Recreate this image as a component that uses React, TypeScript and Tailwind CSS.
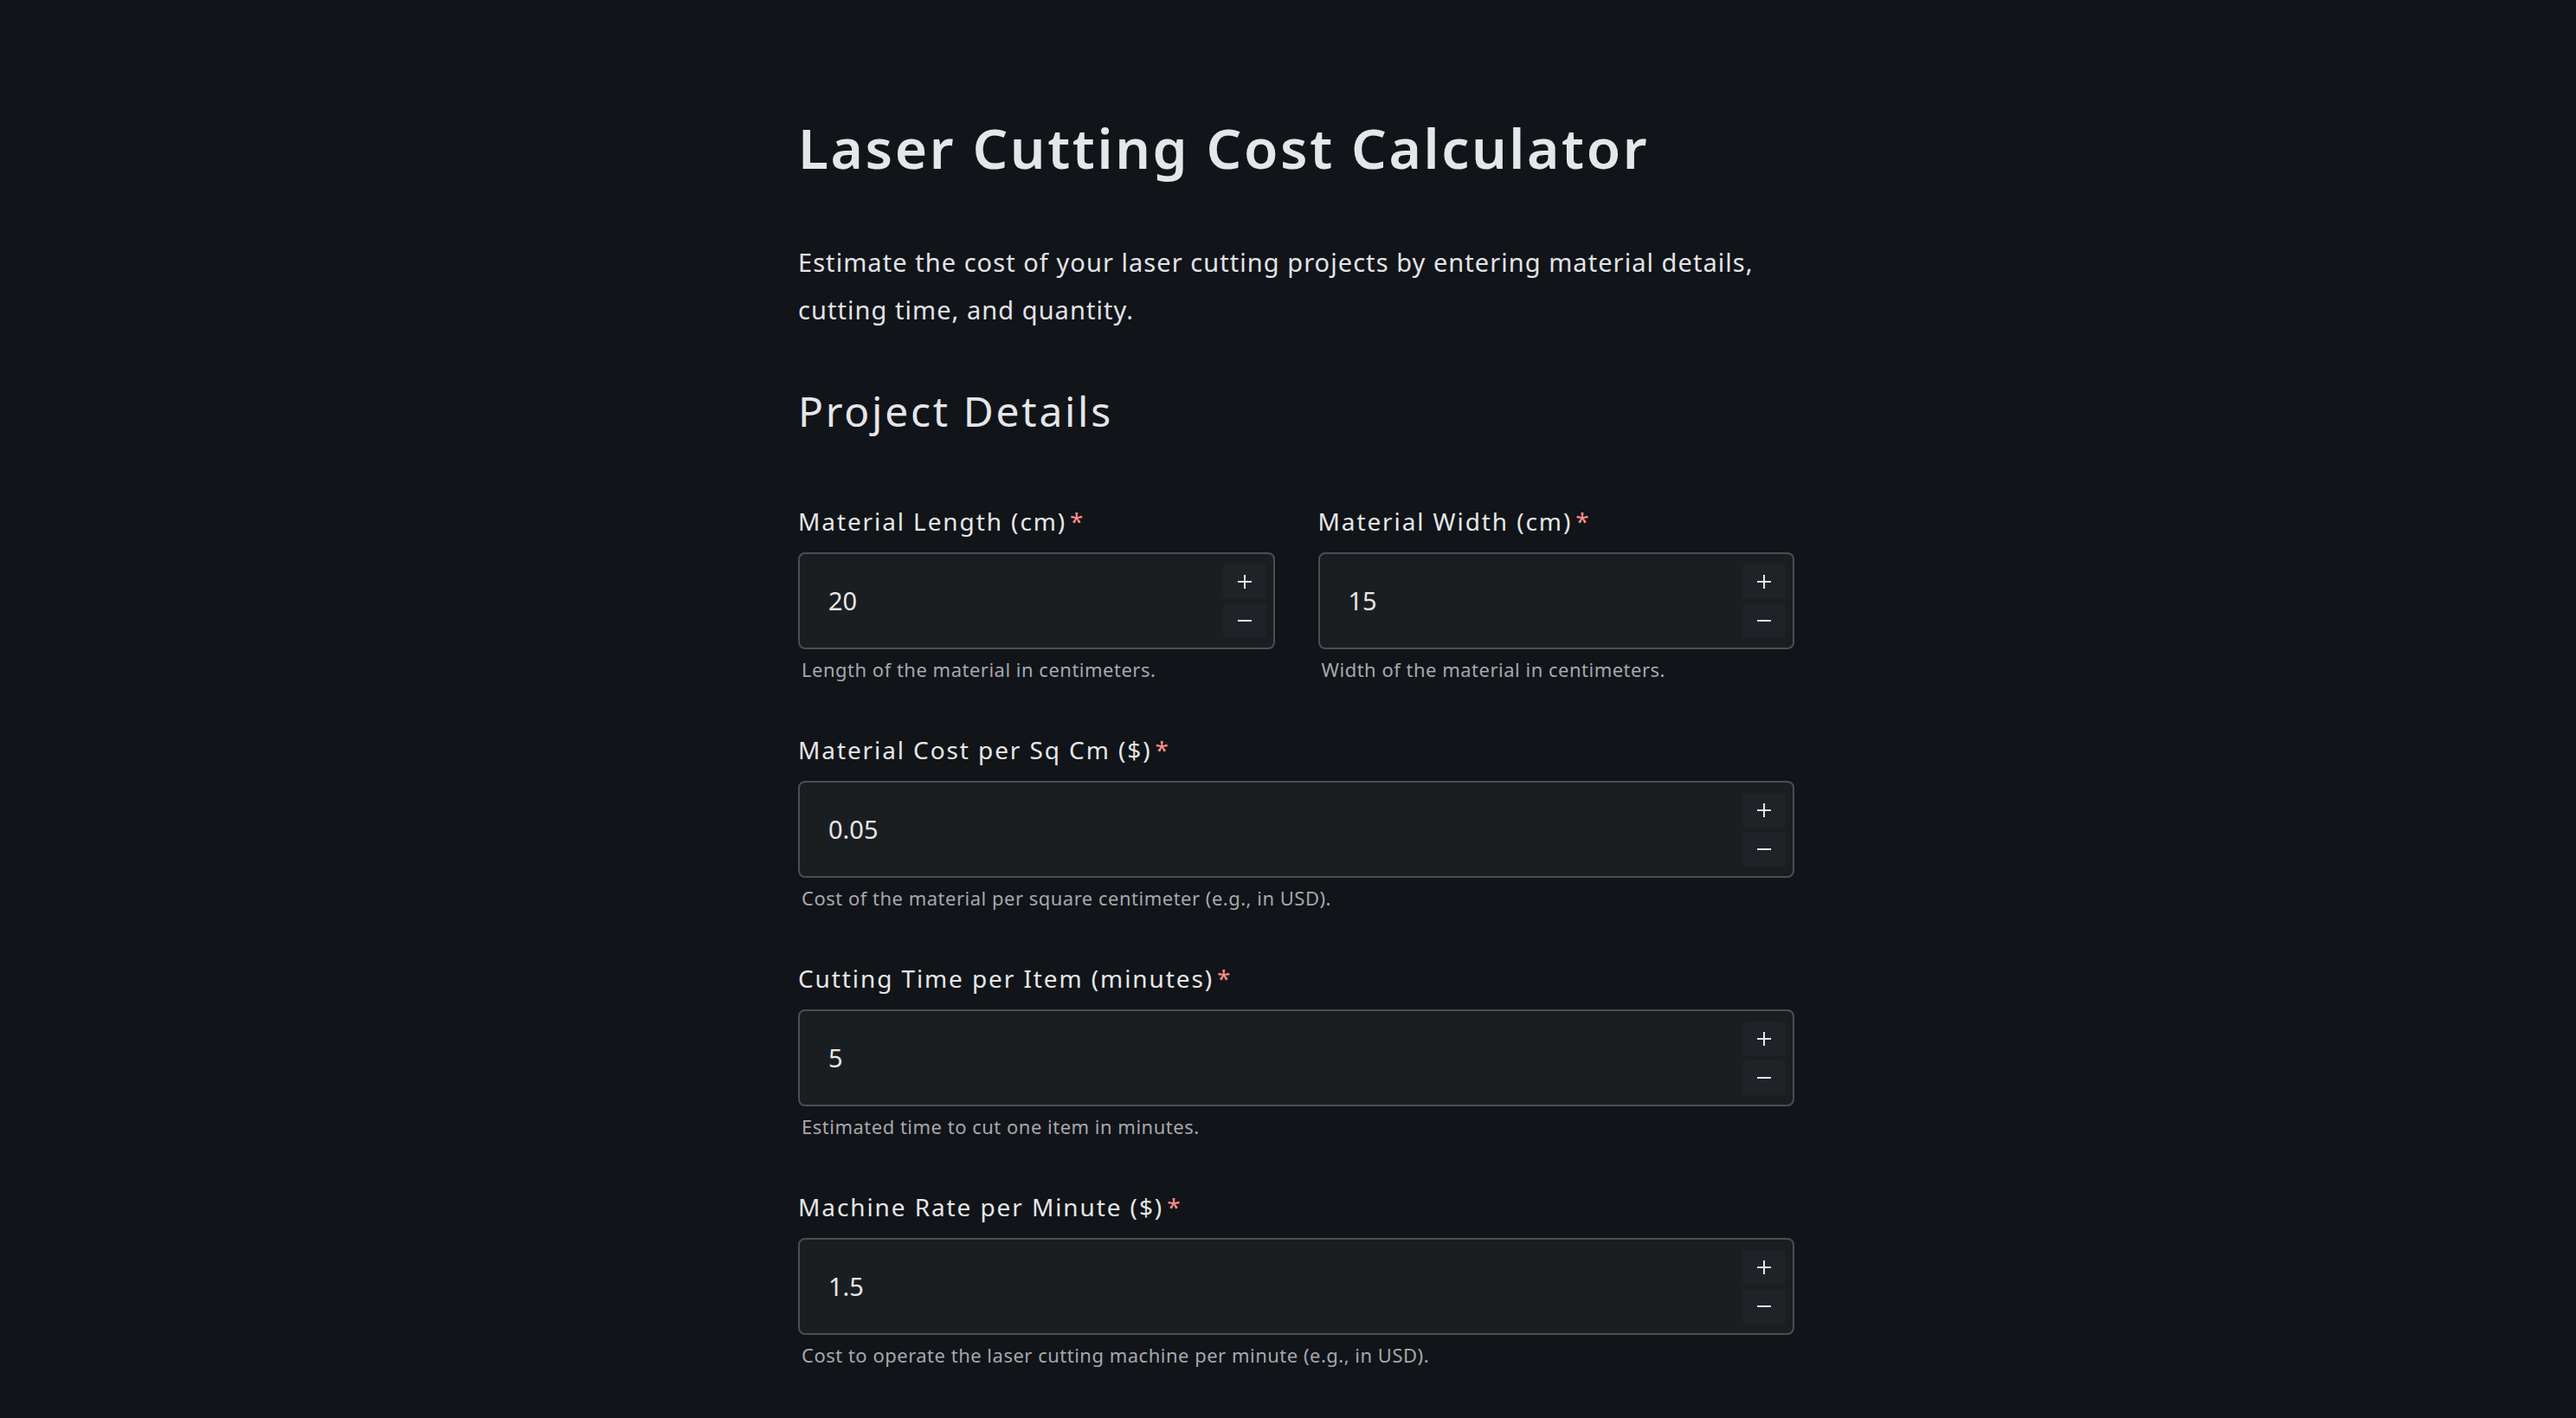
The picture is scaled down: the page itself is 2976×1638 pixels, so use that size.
import React from "react";

interface FieldProps {
  label: string;
  value: string;
  help: string;
}

function NumberField({ label, value, help }: FieldProps) {
  return (
    <div className="flex flex-col">
      <label className="text-[28px] leading-[40px] text-[#e6e7ea] tracking-[1.9px]">
        {label}
        <span className="ml-[4px] text-[#ff8f8f]">*</span>
      </label>
      <div className="mt-[16px] h-[112px] flex items-center rounded-[8px] border-2 border-[#4a4e54] bg-[#1b1e21] pl-[33px] pr-[8px]">
        <span className="flex-1 text-[29px] text-[#e6e7ea]">{value}</span>
        <div className="flex flex-col gap-[5px]">
          <button className="w-[50px] h-[40px] flex items-center justify-center rounded-[4px] bg-[#202227] text-[#e6e7ea]">
            <svg width="18" height="18" viewBox="0 0 18 18" fill="none" stroke="currentColor" strokeWidth="2">
              <path d="M9 1v16M1 9h16" />
            </svg>
          </button>
          <button className="w-[50px] h-[40px] flex items-center justify-center rounded-[4px] bg-[#202227] text-[#e6e7ea]">
            <svg width="18" height="18" viewBox="0 0 18 18" fill="none" stroke="currentColor" strokeWidth="2">
              <path d="M1 9h16" />
            </svg>
          </button>
        </div>
      </div>
      <p className="mt-[10px] pl-[4px] text-[22px] leading-[26px] text-[#a5a8ae] tracking-[0.5px]">{help}</p>
    </div>
  );
}

export default function App() {
  return (
    <div
      className="min-h-[1638px] bg-[#111418] pl-[19px] pt-[126px] pb-[60px]"
      style={{ fontFamily: '"Noto Sans", "Open Sans", sans-serif' }}
    >
      <div className="mx-auto w-[1151px]">
        <h1 className="text-[64px] leading-[90px] font-semibold text-[#e4e6ea] tracking-[2.6px]">
          Laser Cutting Cost Calculator
        </h1>
        <p className="mt-[59px] text-[29px] leading-[55px] text-[#e2e4e8] tracking-[1.05px]">
          Estimate the cost of your laser cutting projects by entering material details,
          cutting time, and quantity.
        </p>
        <h2 className="mt-[60px] text-[48px] leading-[60px] text-[#e4e6ea] tracking-[2.7px]">Project Details</h2>

        <div className="mt-[77px] flex flex-col gap-[60px]">
          <div className="grid grid-cols-2 gap-[50px]">
            <NumberField label="Material Length (cm)" value="20" help="Length of the material in centimeters." />
            <NumberField label="Material Width (cm)" value="15" help="Width of the material in centimeters." />
          </div>
          <NumberField
            label="Material Cost per Sq Cm ($)"
            value="0.05"
            help="Cost of the material per square centimeter (e.g., in USD)."
          />
          <NumberField
            label="Cutting Time per Item (minutes)"
            value="5"
            help="Estimated time to cut one item in minutes."
          />
          <NumberField
            label="Machine Rate per Minute ($)"
            value="1.5"
            help="Cost to operate the laser cutting machine per minute (e.g., in USD)."
          />
        </div>
      </div>
    </div>
  );
}
